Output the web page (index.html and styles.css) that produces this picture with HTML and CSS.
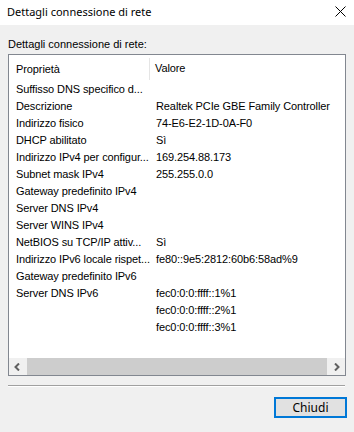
FILE: index.html
```html
<!DOCTYPE html>
<html lang="it">
<head>
  <meta charset="UTF-8" />
  <title>Dettagli connessione di rete</title>
  <link rel="stylesheet" href="styles.css">
</head>
<body>
  <div class="window">
    <div class="titlebar">
      <span class="title">Dettagli connessione di rete</span>
      <svg class="close" width="11" height="11" viewBox="0 0 11 11">
        <path d="M0.5 0.5 L10.5 10.5 M10.5 0.5 L0.5 10.5" stroke="#000" stroke-width="1" fill="none"/>
      </svg>
    </div>
    <div class="content">
      <div class="caption">Dettagli connessione di rete:</div>
      <div class="listbox">
        <div class="list-body">
          <div class="list-header">
            <div class="col col-name">Proprietà</div>
            <div class="col col-value">Valore</div>
          </div>
          <div class="row"><div class="col col-name">Suffisso DNS specifico d...</div><div class="col col-value"></div></div>
          <div class="row"><div class="col col-name">Descrizione</div><div class="col col-value">Realtek PCIe GBE Family Controller</div></div>
          <div class="row"><div class="col col-name">Indirizzo fisico</div><div class="col col-value">74-E6-E2-1D-0A-F0</div></div>
          <div class="row"><div class="col col-name">DHCP abilitato</div><div class="col col-value">Sì</div></div>
          <div class="row"><div class="col col-name">Indirizzo IPv4 per configur...</div><div class="col col-value">169.254.88.173</div></div>
          <div class="row"><div class="col col-name">Subnet mask IPv4</div><div class="col col-value">255.255.0.0</div></div>
          <div class="row"><div class="col col-name">Gateway predefinito IPv4</div><div class="col col-value"></div></div>
          <div class="row"><div class="col col-name">Server DNS IPv4</div><div class="col col-value"></div></div>
          <div class="row"><div class="col col-name">Server WINS IPv4</div><div class="col col-value"></div></div>
          <div class="row"><div class="col col-name">NetBIOS su TCP/IP attiv...</div><div class="col col-value">Sì</div></div>
          <div class="row"><div class="col col-name">Indirizzo IPv6 locale rispet...</div><div class="col col-value">fe80::9e5:2812:60b6:58ad%9</div></div>
          <div class="row"><div class="col col-name">Gateway predefinito IPv6</div><div class="col col-value"></div></div>
          <div class="row"><div class="col col-name">Server DNS IPv6</div><div class="col col-value">fec0:0:0:ffff::1%1</div></div>
          <div class="row"><div class="col col-name"></div><div class="col col-value">fec0:0:0:ffff::2%1</div></div>
          <div class="row"><div class="col col-name"></div><div class="col col-value">fec0:0:0:ffff::3%1</div></div>
        </div>
        <div class="hscroll">
          <div class="arrow">
            <svg width="7" height="8" viewBox="0 0 7 8"><path d="M5 0.5 L1.5 4 L5 7.5" stroke="#606060" stroke-width="2" fill="none"/></svg>
          </div>
          <div class="track"><div class="thumb"></div></div>
          <div class="arrow">
            <svg width="7" height="8" viewBox="0 0 7 8"><path d="M2 0.5 L5.5 4 L2 7.5" stroke="#606060" stroke-width="2" fill="none"/></svg>
          </div>
        </div>
      </div>
      <div class="separator"></div>
      <div class="actions">
        <button type="button" class="btn">Chiudi</button>
      </div>
    </div>
  </div>
</body>
</html>
```

FILE: styles.css
```css
html, body {
  margin: 0;
  padding: 0;
}
body {
  width: 354px;
  height: 432px;
  background: #f0f0f0;
  font-family: "Liberation Sans", Arial, sans-serif;
  font-size: 11px;
  color: #000;
  overflow: hidden;
}
.window {
  display: flex;
  flex-direction: column;
  height: 432px;
}
.titlebar {
  height: 25px;
  background: #fff;
  display: flex;
  align-items: center;
  justify-content: space-between;
  padding: 0 8px 2px 7px;
  box-sizing: border-box;
}
.title {
  font-family: "Noto Sans", "Open Sans", sans-serif;
  font-size: 11px;
  color: #000;
}
.close {
  margin-top: -1px;
}
.content {
  padding: 0 8px;
}
.caption {
  font-size: 11px;
  height: 17px;
  line-height: 17px;
  margin: 11px 0 1px 0;
}
.listbox {
  width: 338px;
  height: 322px;
  box-sizing: border-box;
  border: 1px solid #828790;
  background: #fff;
  display: flex;
  flex-direction: column;
  letter-spacing: -0.1px;
}
.list-body {
  flex: 1;
  overflow: hidden;
}
.list-header {
  display: flex;
  height: 25px;
  align-items: center;
}
.list-header .col-name {
  border-right: 1px solid #e5e5e5;
  height: 22px;
  line-height: 22px;
  margin-top: 2px;
}
.row {
  display: flex;
  height: 17px;
  line-height: 17px;
  margin-top: 0;
}
.list-header + .row {
  margin-top: 1px;
}
.col {
  white-space: nowrap;
}
.col-name {
  width: 133px;
  padding-left: 7px;
  flex-shrink: 0;
}
.col-value {
  padding-left: 6px;
}
.row .col-name {
  width: 134px;
}
.list-header .col-value {
  padding-left: 5px;
}
.hscroll {
  height: 17px;
  display: flex;
  background: #f0f0f0;
}
.arrow {
  width: 17px;
  display: flex;
  align-items: center;
  justify-content: center;
}
.track {
  flex: 1;
  padding: 0 1px;
}
.thumb {
  height: 100%;
  background: #cdcdcd;
}
.separator {
  width: 337px;
  height: 1px;
  background: #a0a0a0;
  border-bottom: 1px solid #fff;
  margin-top: 9px;
}
.actions {
  display: flex;
  justify-content: flex-end;
  margin-top: 10px;
  margin-right: -1px;
}
.btn {
  width: 73px;
  height: 21px;
  box-sizing: border-box;
  border: 2px solid #0078d7;
  background: #e1e1e1;
  font-family: "Noto Sans", "Open Sans", sans-serif;
  font-size: 12px;
  color: #000;
  padding: 0;
  line-height: 15px;
}
```
